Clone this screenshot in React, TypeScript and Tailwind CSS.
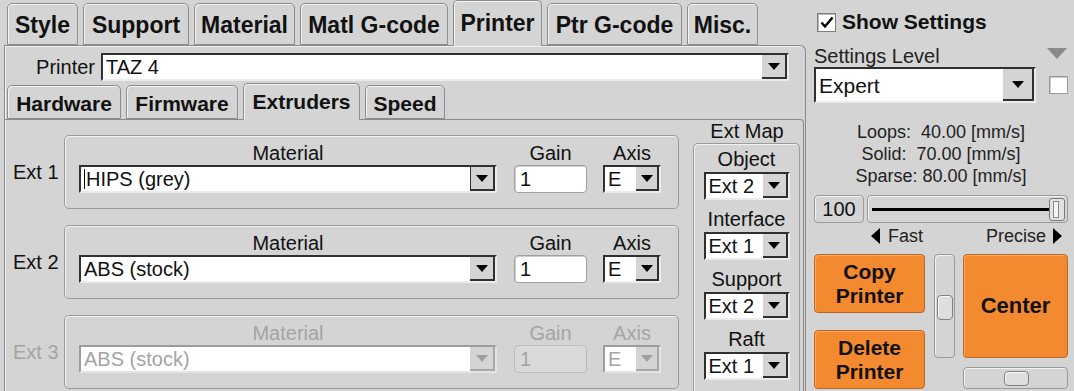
import React from "react";

const font = "font-['Liberation_Sans',Arial,sans-serif]";

const topTabs = [
  { label: "Style", w: "w-[71px]" },
  { label: "Support", w: "w-[106px]" },
  { label: "Material", w: "w-[101px]" },
  { label: "Matl G-code", w: "w-[148px]" },
  { label: "Printer", w: "w-[89px]", active: true },
  { label: "Ptr G-code", w: "w-[135px]" },
  { label: "Misc.", w: "w-[71px]" },
];

const subTabs = [
  { label: "Hardware", w: "w-[114px]" },
  { label: "Firmware", w: "w-[112px]" },
  { label: "Extruders", w: "w-[117px]", active: true },
  { label: "Speed", w: "w-[80px]" },
];

const extruders = [
  { name: "Ext 1", material: "HIPS (grey)", focused: true },
  { name: "Ext 2", material: "ABS (stock)" },
  { name: "Ext 3", material: "ABS (stock)", disabled: true },
];

const extMap = [
  { label: "Object", value: "Ext 2" },
  { label: "Interface", value: "Ext 1" },
  { label: "Support", value: "Ext 2" },
  { label: "Raft", value: "Ext 1" },
];

function Arrow({ disabled }: { disabled?: boolean }) {
  return (
    <div
      className={`w-0 h-0 border-x-[6px] border-x-transparent border-t-[7px] ${
        disabled ? "border-t-[#a0a0a0]" : "border-t-black"
      }`}
    />
  );
}

function Select({
  value,
  className = "",
  btn = "w-[25px]",
  disabled,
  focused,
}: {
  value: string;
  className?: string;
  btn?: string;
  disabled?: boolean;
  focused?: boolean;
}) {
  return (
    <div
      className={`flex bg-white border-2 ${
        disabled
          ? "border-t-[#9c9c9c] border-l-[#9c9c9c] border-r-[#e4e4e4] border-b-[#e4e4e4]"
          : "border-t-[#303030] border-l-[#303030] border-r-[#ececec] border-b-[#ececec]"
      } ${className}`}
    >
      <div
        className={`flex-1 flex items-center pl-[3px] whitespace-nowrap overflow-hidden leading-none ${
          disabled ? "text-[#a4a4a4]" : "text-[#111]"
        }`}
      >
        {focused && <span className="w-px h-[20px] bg-black mr-px" />}
        {value}
      </div>
      <div
        className={`${btn} flex items-center justify-center bg-[#d4d4d4] border-r-2 border-b-2 ${
          disabled ? "border-r-[#a8a8a8] border-b-[#a8a8a8]" : "border-r-[#303030] border-b-[#303030]"
        } ${focused ? "border-l border-l-[#303030]" : ""}`}
      >
        <Arrow disabled={disabled} />
      </div>
    </div>
  );
}

function TopTab({ label, w, active }: { label: string; w: string; active?: boolean }) {
  return (
    <div
      className={`${w} flex items-center justify-center rounded-t-[5px] border border-[#8c8c8c] bg-[#d4d4d4] shadow-[inset_1px_1px_0_#f4f4f4] font-bold text-[23px] whitespace-nowrap ${
        active ? "h-[46px] -mb-px border-b-0 relative z-10" : "h-[42px] pt-[2px]"
      }`}
    >
      {label}
    </div>
  );
}

function SubTab({ label, w, active }: { label: string; w: string; active?: boolean }) {
  return (
    <div
      className={`${w} flex items-center justify-center rounded-t-[5px] border border-[#8c8c8c] bg-[#d4d4d4] shadow-[inset_1px_1px_0_#f4f4f4] font-bold text-[21px] whitespace-nowrap ${
        active ? "h-[37px] -mb-px border-b-0 relative z-10" : "h-[34px] pt-[3px]"
      }`}
    >
      {label}
    </div>
  );
}

function ExtRow({
  name,
  material,
  disabled,
  focused,
}: {
  name: string;
  material: string;
  disabled?: boolean;
  focused?: boolean;
}) {
  const label = disabled ? "text-[#a4a4a4]" : "text-[#111]";
  return (
    <div className="flex items-center h-[74px]">
      <div className={`w-[59px] pl-[8px] text-[20px] ${label}`}>{name}</div>
      <div className="w-[615px] h-[74px] rounded-[5px] border border-[#9a9a9a] shadow-[inset_1px_1px_0_#f2f2f2] flex pt-[5px] pl-[14px]">
        <div className="w-[418px] flex flex-col">
          <div className={`h-[24px] leading-[24px] text-center text-[20px] ${label}`}>Material</div>
          <Select value={material} className="h-[28px] text-[20px]" disabled={disabled} focused={focused} />
        </div>
        <div className="w-[73px] ml-[17px] flex flex-col">
          <div className={`h-[24px] leading-[24px] text-center text-[20px] ${label}`}>Gain</div>
          <div
            className={`h-[28px] rounded-[4px] border flex items-center pl-[5px] text-[20px] ${
              disabled
                ? "bg-[#d9d9d9] border-[#bcbcbc] text-[#a4a4a4]"
                : "bg-white border-[#a0a0a0] shadow-[inset_1px_1px_0_#cfcfcf]"
            }`}
          >
            1
          </div>
        </div>
        <div className="w-[58px] ml-[16px] flex flex-col">
          <div className={`h-[24px] leading-[24px] text-center text-[20px] ${label}`}>Axis</div>
          <Select value="E" className="h-[28px] text-[20px]" btn="w-[23px]" disabled={disabled} />
        </div>
      </div>
    </div>
  );
}

function LeftPane() {
  return (
    <div className="w-[806px] flex flex-col">
      <div className="h-[45px] flex items-end gap-[5px] pl-[7px]">
        {topTabs.map((t) => (
          <TopTab key={t.label} {...t} />
        ))}
      </div>
      <div className="ml-[4px] w-[802px] flex-1 flex flex-col border-l border-t border-r rounded-tr-[6px] border-[#8a8a8a] shadow-[inset_1px_1px_0_#f0f0f0]">
        <div className="h-[37px] pt-[7px] flex items-start">
          <div className="w-[96px] h-[28px] flex items-center justify-end pr-[6px] text-[20px]">Printer</div>
          <Select value="TAZ 4" className="w-[688px] h-[28px] text-[20px]" />
        </div>
        <div className="h-[36px] flex items-end gap-[5px] pl-[2px]">
          {subTabs.map((t) => (
            <SubTab key={t.label} {...t} />
          ))}
        </div>
        <div className="flex-1 flex mr-px border-t border-r rounded-tr-[4px] border-[#8a8a8a]">
          <div className="w-[688px] flex flex-col gap-[16px] pt-[15px]">
            {extruders.map((e) => (
              <ExtRow key={e.name} {...e} />
            ))}
          </div>
          <div className="w-[108px] flex flex-col">
            <div className="h-[23px] leading-[23px] text-center text-[20px]">Ext Map</div>
            <div className="flex-1 w-[107px] rounded-t-[5px] border border-b-0 border-[#9a9a9a] shadow-[inset_1px_1px_0_#f2f2f2] flex flex-col items-center gap-[4px]">
              {extMap.map((m) => (
                <div key={m.label} className="flex flex-col items-center">
                  <div className="h-[28px] leading-[30px] text-[20px]">{m.label}</div>
                  <Select value={m.value} className="w-[86px] h-[28px] text-[20px]" />
                </div>
              ))}
            </div>
          </div>
        </div>
      </div>
    </div>
  );
}

function OrangeButton({ children, className }: { children: React.ReactNode; className: string }) {
  return (
    <div
      className={`${className} rounded-[4px] border border-[#b8682a] bg-[#f48a2f] shadow-[inset_1px_1px_0_#f8a860] flex flex-col items-center justify-center font-bold leading-[24px] text-center`}
    >
      {children}
    </div>
  );
}

function RightPane() {
  return (
    <div className="w-[268px] pl-[8px] pr-[6px] flex flex-col">
      <div className="mt-[12px] h-[20px] flex items-center pl-[3px]">
        <div className="w-[19px] h-[19px] bg-white border border-[#7c7c7c] shadow-[inset_1px_1px_0_#bdbdbd] flex items-center justify-center">
          <svg width="14" height="13" viewBox="0 0 14 13">
            <path d="M1.5 6.5 L5 10.5 L12.5 1.5" fill="none" stroke="#000" strokeWidth="2.4" />
          </svg>
        </div>
        <span className="ml-[6px] font-bold text-[21px]">Show Settings</span>
      </div>
      <div className="mt-[12px] h-[23px] flex items-center justify-between">
        <span className="text-[20px] text-[#222]">Settings Level</span>
        <div className="self-start mt-[4px] mr-px w-0 h-0 border-x-[10px] border-x-transparent border-t-[11px] border-t-[#8a8a8a]" />
      </div>
      <div className="h-[36px] flex items-center">
        <Select value="Expert" className="w-[222px] h-[36px] text-[21px]" btn="w-[31px]" />
        <div className="ml-auto w-[19px] h-[18px] bg-white border border-[#9a9a9a] shadow-[inset_1px_1px_0_#c8c8c8]" />
      </div>
      <div className="mt-[18px] text-center text-[18px] leading-[22px] text-[#222]">
        <div>Loops:&nbsp; 40.00 [mm/s]</div>
        <div>Solid:&nbsp; 70.00 [mm/s]</div>
        <div>Sparse: 80.00 [mm/s]</div>
      </div>
      <div className="mt-[8px] h-[28px] flex gap-[3px]">
        <div className="w-[50px] rounded-[4px] border border-[#9a9a9a] shadow-[inset_1px_1px_0_#f2f2f2] flex items-center justify-center text-[20px]">
          100
        </div>
        <div className="flex-1 rounded-[4px] border border-[#9a9a9a] shadow-[inset_1px_1px_0_#f2f2f2] flex items-center pl-[4px] pr-[2px]">
          <div className="flex-1 h-[3px] bg-black" />
          <div className="w-[16px] h-[23px] rounded-[3px] border border-[#7a7a7a] bg-[#e2e2e2] flex items-center pl-[3px]">
            <div className="w-[6px] h-[17px] border border-[#8a8a8a] bg-[#f4f4f4]" />
          </div>
        </div>
      </div>
      <div className="mt-[5px] h-[16px] flex items-center text-[18px] text-[#222]">
        <div className="ml-[57px] w-0 h-0 border-y-[8px] border-y-transparent border-r-[9px] border-r-black" />
        <span className="ml-[8px]">Fast</span>
        <span className="ml-auto">Precise</span>
        <div className="ml-[7px] mr-[6px] w-0 h-0 border-y-[8px] border-y-transparent border-l-[9px] border-l-black" />
      </div>
      <div className="mt-[10px] flex">
        <div className="w-[111px] flex flex-col">
          <OrangeButton className="h-[59px] text-[21px]">
            <span>Copy</span>
            <span>Printer</span>
          </OrangeButton>
          <OrangeButton className="mt-[17px] h-[59px] text-[21px]">
            <span>Delete</span>
            <span>Printer</span>
          </OrangeButton>
        </div>
        <div className="ml-[9px] w-[21px] h-[104px] rounded-[4px] border border-[#9a9a9a] shadow-[inset_1px_1px_0_#f2f2f2] flex flex-col items-center pt-[40px]">
          <div className="w-[16px] h-[25px] rounded-[4px] border border-[#808080] bg-[#dedede] shadow-[inset_1px_1px_0_#f8f8f8]" />
        </div>
        <div className="ml-[8px] w-[105px] flex flex-col">
          <OrangeButton className="h-[104px] text-[22px]">Center</OrangeButton>
          <div className="mt-[9px] h-[22px] rounded-[4px] border border-[#9a9a9a] shadow-[inset_1px_1px_0_#f2f2f2] flex items-center pl-[40px]">
            <div className="w-[25px] h-[15px] rounded-[4px] border border-[#808080] bg-[#dedede] shadow-[inset_1px_1px_0_#f8f8f8]" />
          </div>
        </div>
      </div>
    </div>
  );
}

export default function App() {
  return (
    <div className={`w-[1074px] h-[391px] overflow-hidden bg-[#d4d4d4] flex text-[#111] ${font}`}>
      <LeftPane />
      <RightPane />
    </div>
  );
}
